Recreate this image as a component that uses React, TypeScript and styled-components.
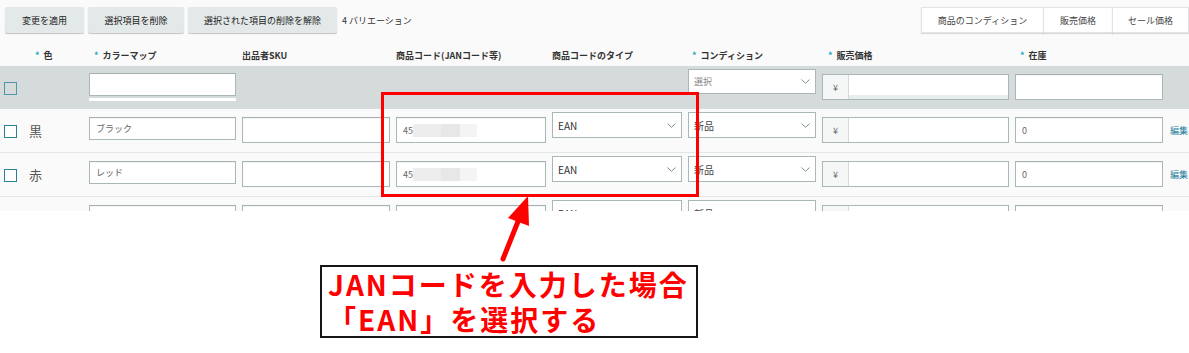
import React from "react";
import styled, { createGlobalStyle } from "styled-components";

const GlobalStyle = createGlobalStyle`
  html, body { margin: 0; padding: 0; background: #ffffff; }
  body { font-family: "Noto Sans CJK JP", "Noto Sans", sans-serif; color: #333; }
  * { box-sizing: border-box; }
`;

const COLS = "19px 54px 147px 148px 150px 130px 128px 187px 148px 1fr";

const Page = styled.div`
  position: relative;
  width: 1189px;
  height: 353px;
  overflow: hidden;
`;

const Panel = styled.div`
  height: 211px;
  overflow: hidden;
  background: #fafafa;
`;

const Toolbar = styled.div`
  display: flex;
  justify-content: space-between;
  align-items: flex-start;
  height: 40px;
  padding: 7px 0 0 5px;
`;

const ButtonGroup = styled.div`
  display: flex;
  align-items: center;
  gap: 4px;
`;

const ActionButton = styled.button<{ $w: number }>`
  width: ${(p) => p.$w}px;
  height: 26px;
  border: none;
  border-radius: 2px;
  background: #e3e8e8;
  box-shadow: 0 1px 1px rgba(0, 0, 0, 0.22);
  font-family: inherit;
  font-size: 9px;
  color: #222;
  padding: 0;
`;

const VariationCount = styled.span`
  font-size: 9px;
  color: #333;
  margin-left: 1px;
`;

const TabGroup = styled.div`
  display: flex;
  margin-left: auto;
`;

const TabButton = styled.button<{ $w: number }>`
  width: ${(p) => p.$w}px;
  height: 26px;
  border: 1px solid #e1e4e4;
  margin-left: -1px;
  background: #ffffff;
  box-shadow: 0 1px 1px rgba(0, 0, 0, 0.12);
  font-family: inherit;
  font-size: 9px;
  color: #444;
  padding: 0;
`;

const GridRow = styled.div`
  display: grid;
  grid-template-columns: ${COLS};
  column-gap: 6px;
  padding-left: 4px;
`;

const HeaderRow = styled(GridRow)`
  height: 26px;
  align-items: center;
  padding-top: 4px;
`;

const HeaderCell = styled.div<{ $pad?: number }>`
  font-size: 9px;
  font-weight: 700;
  color: #333;
  padding-left: ${(p) => p.$pad ?? 0}px;
  white-space: nowrap;
`;

const Star = styled.span`
  color: #16a5c9;
  margin-right: 4px;
`;

const BulkRow = styled(GridRow)`
  height: 43px;
  background: #d5dbdb;
  align-items: start;
`;

const DataRow = styled(GridRow)`
  height: 44px;
  border-bottom: 1px solid #e3e6e6;
  align-items: start;
`;

const Checkbox = styled.span<{ $light?: boolean }>`
  align-self: center;
  display: block;
  width: 13px;
  height: 13px;
  border: 1px solid ${(p) => (p.$light ? "#4f97ab" : "#2d7f94")};
  background: ${(p) => (p.$light ? "#d5dbdb" : "#fff")};
  margin-top: 1px;
`;

const ColorName = styled.span`
  align-self: center;
  font-size: 13px;
  color: #555;
  line-height: 1;
`;

const TextInput = styled.div<{ $h?: number; $top?: number; $underline?: boolean }>`
  height: ${(p) => p.$h ?? 26}px;
  margin-top: ${(p) => p.$top ?? 8}px;
  background: #fff;
  border: 1px solid #aab7b8;
  border-top-color: #a3afb0;
  display: flex;
  align-items: center;
  padding-left: 6px;
  font-size: 9px;
  color: #666;
  box-shadow: ${(p) =>
    p.$underline ? "0 2px 0 #d5dbdb, 0 5px 0 #ffffff" : "inset 0 1px 1px rgba(0,0,0,0.04)"};
`;

const Redacted = styled.span`
  display: inline-block;
  width: 64px;
  height: 13px;
  background: linear-gradient(
    90deg,
    #ededed 0,
    #ededed 28px,
    #e7e7e7 28px,
    #e7e7e7 47px,
    #f4f4f4 47px
  );
`;

const SelectBox = styled.div<{ $top?: number; $h?: number }>`
  height: ${(p) => p.$h ?? 26}px;
  margin-top: ${(p) => p.$top ?? 3}px;
  background: #fff;
  border: 1px solid #aab7b8;
  display: flex;
  align-items: center;
  justify-content: space-between;
  padding: 0 5px 0 5px;
  font-size: 10px;
  color: #333;
`;

const Placeholder = styled.span`
  color: #888;
  font-size: 9px;
`;

const ConditionText = styled.span`
  font-size: 10px;
  color: #444;
`;

const PriceInput = styled.div`
  height: 26px;
  margin-top: 8px;
  border: 1px solid #aab7b8;
  display: flex;
  background: #fff;
`;

const Currency = styled.span`
  width: 26px;
  background: #f5f6f6;
  border-right: 1px solid #d5dbdb;
  display: flex;
  align-items: center;
  justify-content: center;
  font-size: 9px;
  color: #666;
`;

const PriceField = styled.span<{ $bulk?: boolean }>`
  flex: 1;
  background: #fff;
  box-shadow: ${(p) => (p.$bulk ? "inset 0 -4px 0 #e9ecec" : "none")};
`;

const EditLink = styled.span`
  align-self: center;
  font-size: 9px;
  color: #1a7f9c;
  margin-left: 1px;
`;

const Callout = styled.div`
  margin: 54px 0 0 320px;
  width: 378px;
  height: 73px;
  border: 2px solid #161616;
  background: #fff;
  padding: 0 0 0 6px;
  font-family: "Noto Sans CJK JP", "Noto Sans", sans-serif;
  font-weight: 700;
  font-size: 28px;
  letter-spacing: 2px;
  color: #ff0000;
  white-space: nowrap;
`;

const CalloutLine = styled.div`
  height: 35px;
  line-height: 35px;
`;

const Highlight = styled.div`
  position: absolute;
  left: 381px;
  top: 92px;
  width: 318px;
  height: 105px;
  border: 3px solid #ff0000;
  pointer-events: none;
`;

const ArrowLayer = styled.svg`
  position: absolute;
  left: 0;
  top: 0;
  width: 1189px;
  height: 353px;
  pointer-events: none;
`;

const Chevron = () => (
  <svg width="9" height="5" viewBox="0 0 9 5">
    <path d="M0.5 0.5 L4.5 4.3 L8.5 0.5" fill="none" stroke="#808a8a" strokeWidth="1" />
  </svg>
);

type RowData = { name: string; map: string };

const rows: RowData[] = [
  { name: "黒", map: "ブラック" },
  { name: "赤", map: "レッド" },
  { name: "白", map: "ホワイト" },
];

export default function App() {
  return (
    <>
      <GlobalStyle />
      <Page>
        <Panel>
          <Toolbar>
            <ButtonGroup>
              <ActionButton $w={79}>変更を適用</ActionButton>
              <ActionButton $w={96}>選択項目を削除</ActionButton>
              <ActionButton $w={149}>選択された項目の削除を解除</ActionButton>
              <VariationCount>4 バリエーション</VariationCount>
            </ButtonGroup>
            <TabGroup>
              <TabButton $w={123}>商品のコンディション</TabButton>
              <TabButton $w={70}>販売価格</TabButton>
              <TabButton $w={77}>セール価格</TabButton>
            </TabGroup>
          </Toolbar>

          <HeaderRow>
            <span />
            <HeaderCell $pad={6}>
              <Star>*</Star>色
            </HeaderCell>
            <HeaderCell $pad={5}>
              <Star>*</Star>カラーマップ
            </HeaderCell>
            <HeaderCell>出品者SKU</HeaderCell>
            <HeaderCell>商品コード(JANコード等)</HeaderCell>
            <HeaderCell>商品コードのタイプ</HeaderCell>
            <HeaderCell $pad={4}>
              <Star>*</Star>コンディション
            </HeaderCell>
            <HeaderCell $pad={6}>
              <Star>*</Star>販売価格
            </HeaderCell>
            <HeaderCell $pad={5}>
              <Star>*</Star>在庫
            </HeaderCell>
            <span />
          </HeaderRow>

          <BulkRow>
            <Checkbox $light />
            <span />
            <TextInput $h={23} $top={7} $underline />
            <span />
            <span />
            <span />
            <SelectBox $h={25}>
              <Placeholder>選択</Placeholder>
              <Chevron />
            </SelectBox>
            <PriceInput>
              <Currency>¥</Currency>
              <PriceField $bulk />
            </PriceInput>
            <TextInput />
            <span />
          </BulkRow>

          {rows.map((r) => (
            <DataRow key={r.name}>
              <Checkbox />
              <ColorName>{r.name}</ColorName>
              <TextInput $h={23}>{r.map}</TextInput>
              <TextInput />
              <TextInput>
                45
                <Redacted />
              </TextInput>
              <SelectBox>
                EAN
                <Chevron />
              </SelectBox>
              <SelectBox>
                <ConditionText>新品</ConditionText>
                <Chevron />
              </SelectBox>
              <PriceInput>
                <Currency>¥</Currency>
                <PriceField />
              </PriceInput>
              <TextInput>0</TextInput>
              <EditLink>編集</EditLink>
            </DataRow>
          ))}
        </Panel>

        <Callout>
          <CalloutLine>JANコードを入力した場合</CalloutLine>
          <CalloutLine>「EAN」を選択する</CalloutLine>
        </Callout>

        <Highlight />
        <ArrowLayer viewBox="0 0 1189 353">
          <line x1="503" y1="259" x2="521" y2="214" stroke="#ff0000" strokeWidth="5" strokeLinecap="round" />
          <polygon points="528,196 508,218 529,226" fill="#ff0000" />
        </ArrowLayer>
      </Page>
    </>
  );
}
